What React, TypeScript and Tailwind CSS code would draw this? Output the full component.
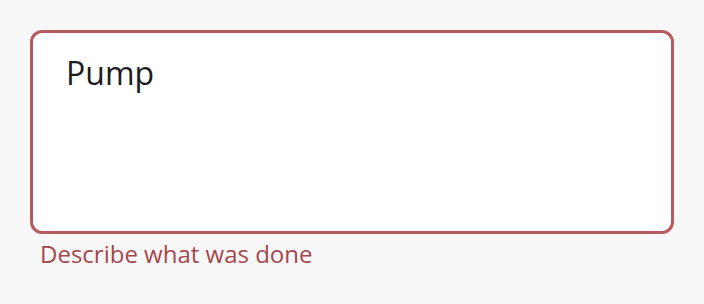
export default function App() {
  return (
    <div className="min-h-[304px] w-[704px] bg-[#f7f7f7] pt-[30px] px-[30px] font-['Open_Sans',sans-serif]">
      <div className="h-[204px] w-[644px] rounded-[12px] border-[3px] border-[#b55a5e] bg-white px-[33px] pt-[18px]">
        <div className="text-[32px] leading-[44px] text-[#1c1c1c]">Pump</div>
      </div>
      <div className="mt-[4px] pl-[10px] text-[24px] leading-[32px] text-[#a3484c]">Describe what was done</div>
    </div>
  );
}
